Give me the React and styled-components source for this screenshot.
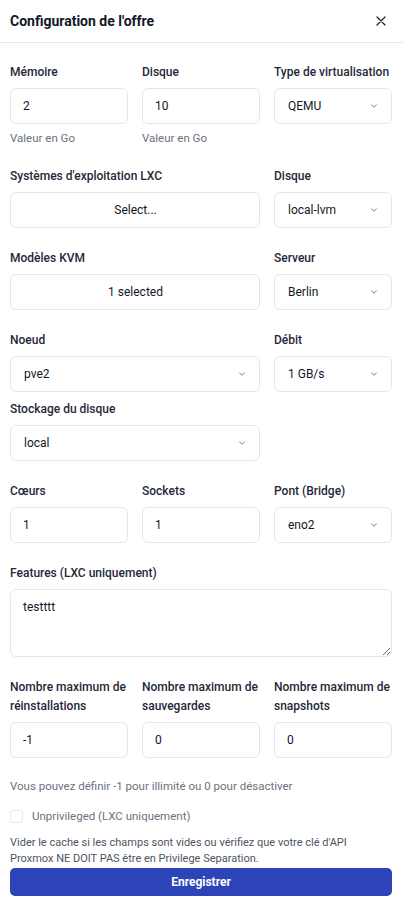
import React from "react";
import styled, { createGlobalStyle } from "styled-components";

const Global = createGlobalStyle`
  html, body { margin: 0; padding: 0; background: #fff; }
  body { font-family: Roboto, "Noto Sans", sans-serif; color: #111827; -webkit-font-smoothing: antialiased; }
  * { box-sizing: border-box; }
`;

const Panel = styled.div`
  width: 403px;
  min-height: 911px;
  background: #fff;
  display: flex;
  flex-direction: column;
`;

const Header = styled.div`
  height: 43px;
  border-bottom: 1px solid #e5e7eb;
  display: flex;
  align-items: center;
  justify-content: space-between;
  padding: 0 15px 0 10px;
`;

const Title = styled.h2`
  margin: 0;
  font-size: 14px;
  font-weight: 700;
  color: #111827;
`;

const Close = styled.button`
  border: none;
  background: none;
  padding: 0;
  width: 14px;
  height: 14px;
  display: flex;
  align-items: center;
  justify-content: center;
  color: #1f2937;
`;

const Body = styled.div`
  padding: 20px 11px 15px 10px;
  display: flex;
  flex-direction: column;
`;

const Grid = styled.div`
  display: grid;
  grid-template-columns: repeat(3, 1fr);
  column-gap: 14px;
  row-gap: ${(p) => p.$rowGap || 0}px;
  margin-top: ${(p) => p.$mt || 0}px;
`;

const Field = styled.div`
  display: flex;
  flex-direction: column;
  grid-column: span ${(p) => p.$span || 1};
  min-width: 0;
`;

const Label = styled.label`
  font-size: 12px;
  line-height: 19px;
  font-weight: 500;
  color: #1f2937;
  margin-bottom: 6px;
`;

const Input = styled.input`
  height: 36px;
  width: 100%;
  border: 1px solid #e5e7eb;
  border-radius: 6px;
  padding: 0 12px;
  font-family: inherit;
  font-size: 12px;
  color: #111827;
  background: #fff;
  outline: none;
`;

const SelectBox = styled.div`
  height: 36px;
  border: 1px solid #e5e7eb;
  border-radius: 6px;
  padding: 0 12px 0 13px;
  display: flex;
  align-items: center;
  justify-content: ${(p) => (p.$center ? "center" : "space-between")};
  font-size: 12px;
  color: #111827;
  background: #fff;
`;

const Helper = styled.div`
  font-size: 11.5px;
  line-height: 16px;
  color: #6b7280;
  margin-top: ${(p) => p.$mt || 6}px;
`;

const TextArea = styled.textarea`
  height: 68px;
  width: 100%;
  border: 1px solid #e5e7eb;
  border-radius: 6px;
  padding: 10px 12px;
  font-family: inherit;
  font-size: 12px;
  color: #111827;
  resize: vertical;
  outline: none;
  display: block;
`;

const CheckRow = styled.label`
  display: flex;
  align-items: center;
  gap: 9px;
  margin-top: 13px;
  font-size: 11.5px;
  line-height: 18px;
  color: #6b7280;
`;

const Box = styled.span`
  width: 13px;
  height: 13px;
  border: 1px solid #e5e7eb;
  border-radius: 3px;
  background: #fff;
  flex: none;
`;

const Info = styled.p`
  margin: 10px 0 0;
  font-size: 11px;
  line-height: 16px;
  color: #4b5563;
`;

const Submit = styled.button`
  margin-top: 1px;
  height: 28px;
  width: 100%;
  border: none;
  border-radius: 5px;
  background: #2c44b8;
  color: #fff;
  font-family: inherit;
  font-size: 12px;
  font-weight: 700;
`;

const Chevron = () => (
  <svg width="10" height="10" viewBox="0 0 24 24" fill="none" stroke="#6b7280" strokeWidth="2.2" strokeLinecap="round" strokeLinejoin="round">
    <path d="m6 9 6 6 6-6" />
  </svg>
);

const Select = ({ value }) => (
  <SelectBox>
    <span>{value}</span>
    <Chevron />
  </SelectBox>
);

const TextField = ({ label, value, helper }) => (
  <Field>
    <Label>{label}</Label>
    <Input defaultValue={value} />
    {helper && <Helper>{helper}</Helper>}
  </Field>
);

const SelectField = ({ label, value, span }) => (
  <Field $span={span}>
    <Label>{label}</Label>
    <Select value={value} />
  </Field>
);

const MultiField = ({ label, value, span }) => (
  <Field $span={span}>
    <Label>{label}</Label>
    <SelectBox $center>{value}</SelectBox>
  </Field>
);

export default function App() {
  return (
    <>
      <Global />
      <Panel>
        <Header>
          <Title>Configuration de l'offre</Title>
          <Close aria-label="Fermer">
            <svg width="10" height="10" viewBox="0 0 10 10" stroke="#1f2937" strokeWidth="1.3" strokeLinecap="round">
              <path d="M1 1l8 8M9 1l-8 8" />
            </svg>
          </Close>
        </Header>
        <Body>
          <Grid>
            <TextField label="Mémoire" value="2" helper="Valeur en Go" />
            <TextField label="Disque" value="10" helper="Valeur en Go" />
            <SelectField label="Type de virtualisation" value="QEMU" />
          </Grid>
          <Grid $mt={21}>
            <MultiField label="Systèmes d'exploitation LXC" value="Select..." span={2} />
            <SelectField label="Disque" value="local-lvm" />
          </Grid>
          <Grid $mt={21}>
            <MultiField label="Modèles KVM" value="1 selected" span={2} />
            <SelectField label="Serveur" value="Berlin" />
          </Grid>
          <Grid $mt={21} $rowGap={8}>
            <SelectField label="Noeud" value="pve2" span={2} />
            <SelectField label="Débit" value="1 GB/s" />
            <SelectField label="Stockage du disque" value="local" span={2} />
          </Grid>
          <Grid $mt={21}>
            <TextField label="Cœurs" value="1" />
            <TextField label="Sockets" value="1" />
            <SelectField label="Pont (Bridge)" value="eno2" />
          </Grid>
          <Grid $mt={21}>
            <Field $span={3}>
              <Label>Features (LXC uniquement)</Label>
              <TextArea defaultValue="testttt" />
            </Field>
          </Grid>
          <Grid $mt={21}>
            <TextField label="Nombre maximum de réinstallations" value="-1" />
            <TextField label="Nombre maximum de sauvegardes" value="0" />
            <TextField label="Nombre maximum de snapshots" value="0" />
          </Grid>
          <Helper $mt={20}>Vous pouvez définir -1 pour illimité ou 0 pour désactiver</Helper>
          <CheckRow>
            <Box />
            Unprivileged (LXC uniquement)
          </CheckRow>
          <Info>
            Vider le cache si les champs sont vides ou vérifiez que votre clé d'API Proxmox NE DOIT PAS être en Privilege Separation.
          </Info>
          <Submit>Enregistrer</Submit>
        </Body>
      </Panel>
    </>
  );
}
